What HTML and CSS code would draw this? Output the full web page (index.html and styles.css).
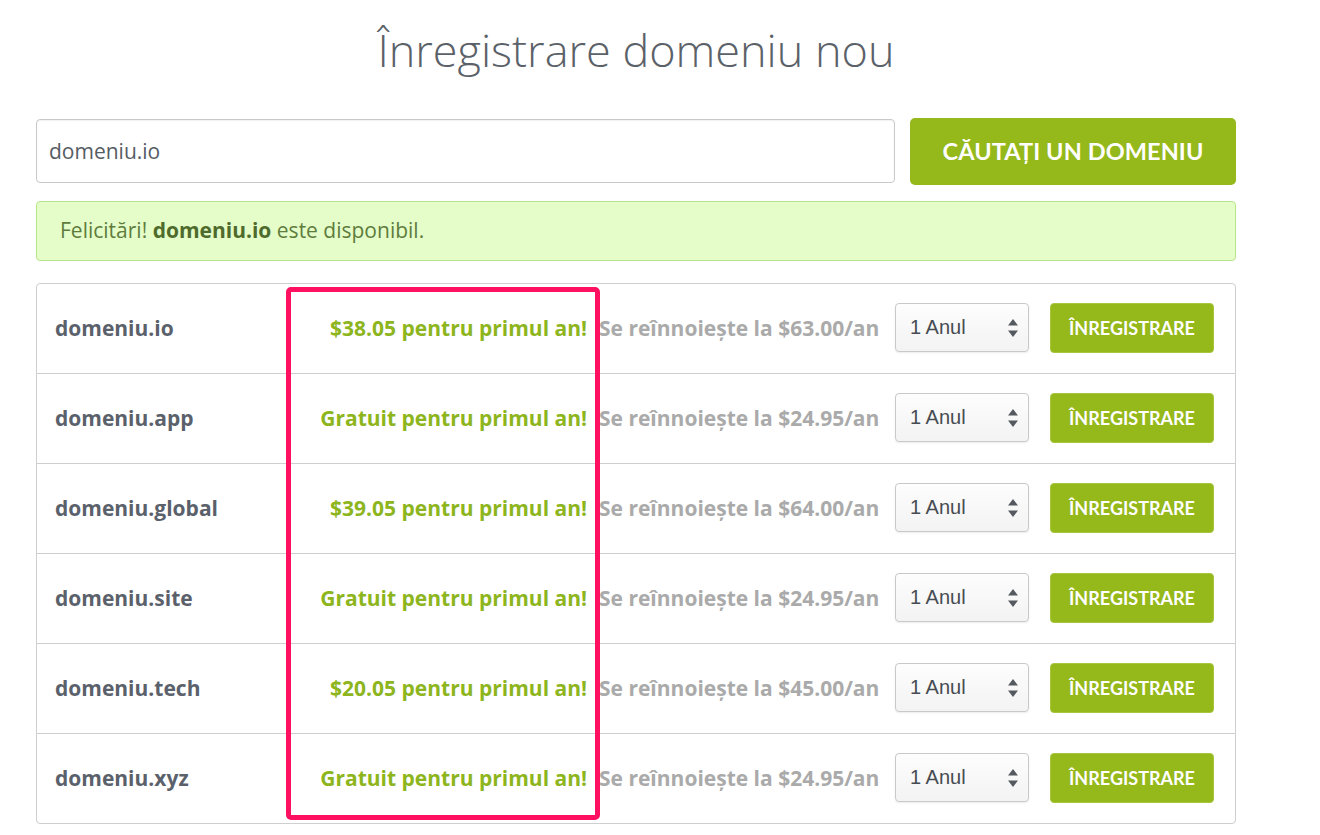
FILE: index.html
```html
<!DOCTYPE html>
<html lang="ro">
<head>
<meta charset="utf-8">
<title>Înregistrare domeniu nou</title>
<link rel="stylesheet" href="styles.css">
</head>
<body>
<div class="page">
  <h1 class="title">Înregistrare domeniu nou</h1>
  <div class="search">
    <div class="search-input">domeniu.io</div>
    <button class="search-btn">CĂUTAȚI UN DOMENIU</button>
  </div>
  <div class="alert"><p class="alert-text">Felicitări! <strong>domeniu.io</strong> este disponibil.</p></div>
  <div class="results">
    <div class="row">
      <div class="name">domeniu.io</div>
      <div class="promo">$38.05 pentru primul an!</div>
      <div class="renew">Se reînnoiește la $63.00/an</div>
      <div class="select"><span>1 Anul</span><svg class="arrows" width="10" height="20" viewBox="0 0 10 20"><path d="M5 1 L10 7.5 L0 7.5 Z M0 12.5 L10 12.5 L5 19 Z" fill="#555a60"/></svg></div>
      <div class="btn-cell"><button class="reg-btn">ÎNREGISTRARE</button></div>
    </div>
    <div class="row">
      <div class="name">domeniu.app</div>
      <div class="promo">Gratuit pentru primul an!</div>
      <div class="renew">Se reînnoiește la $24.95/an</div>
      <div class="select"><span>1 Anul</span><svg class="arrows" width="10" height="20" viewBox="0 0 10 20"><path d="M5 1 L10 7.5 L0 7.5 Z M0 12.5 L10 12.5 L5 19 Z" fill="#555a60"/></svg></div>
      <div class="btn-cell"><button class="reg-btn">ÎNREGISTRARE</button></div>
    </div>
    <div class="row">
      <div class="name">domeniu.global</div>
      <div class="promo">$39.05 pentru primul an!</div>
      <div class="renew">Se reînnoiește la $64.00/an</div>
      <div class="select"><span>1 Anul</span><svg class="arrows" width="10" height="20" viewBox="0 0 10 20"><path d="M5 1 L10 7.5 L0 7.5 Z M0 12.5 L10 12.5 L5 19 Z" fill="#555a60"/></svg></div>
      <div class="btn-cell"><button class="reg-btn">ÎNREGISTRARE</button></div>
    </div>
    <div class="row">
      <div class="name">domeniu.site</div>
      <div class="promo">Gratuit pentru primul an!</div>
      <div class="renew">Se reînnoiește la $24.95/an</div>
      <div class="select"><span>1 Anul</span><svg class="arrows" width="10" height="20" viewBox="0 0 10 20"><path d="M5 1 L10 7.5 L0 7.5 Z M0 12.5 L10 12.5 L5 19 Z" fill="#555a60"/></svg></div>
      <div class="btn-cell"><button class="reg-btn">ÎNREGISTRARE</button></div>
    </div>
    <div class="row">
      <div class="name">domeniu.tech</div>
      <div class="promo">$20.05 pentru primul an!</div>
      <div class="renew">Se reînnoiește la $45.00/an</div>
      <div class="select"><span>1 Anul</span><svg class="arrows" width="10" height="20" viewBox="0 0 10 20"><path d="M5 1 L10 7.5 L0 7.5 Z M0 12.5 L10 12.5 L5 19 Z" fill="#555a60"/></svg></div>
      <div class="btn-cell"><button class="reg-btn">ÎNREGISTRARE</button></div>
    </div>
    <div class="row">
      <div class="name">domeniu.xyz</div>
      <div class="promo">Gratuit pentru primul an!</div>
      <div class="renew">Se reînnoiește la $24.95/an</div>
      <div class="select"><span>1 Anul</span><svg class="arrows" width="10" height="20" viewBox="0 0 10 20"><path d="M5 1 L10 7.5 L0 7.5 Z M0 12.5 L10 12.5 L5 19 Z" fill="#555a60"/></svg></div>
      <div class="btn-cell"><button class="reg-btn">ÎNREGISTRARE</button></div>
    </div>
    <div class="highlight"></div>
  </div>
</div>
</body>
</html>
```

FILE: styles.css
```css
* { box-sizing: border-box; }
html, body { margin: 0; padding: 0; background: #fff; }
body { font-family: "Open Sans", "Liberation Sans", sans-serif; color: #555; }

.page {
  width: 1200px;
  margin-left: 36px;
  padding-top: 20px;
}

.title {
  margin: 0;
  text-align: center;
  font-family: "Open Sans", sans-serif;
  font-weight: 300;
  font-size: 45px;
  line-height: 60px;
  color: #5b6168;
}

.search {
  display: flex;
  align-items: flex-start;
  margin-top: 38px;
  gap: 15px;
}

.search-input {
  width: 859px;
  height: 64px;
  margin-top: 1px;
  border: 1px solid #c9c9c9;
  border-radius: 4px;
  padding: 0 12px 1px;
  display: flex;
  align-items: center;
  font-size: 21px;
  color: #555c63;
  box-shadow: inset 0 1px 2px rgba(0,0,0,0.06);
}

.search-btn {
  width: 326px;
  height: 67px;
  border: none;
  border-radius: 5px;
  background: #95b81b;
  color: #fff;
  font-family: "Lato", sans-serif;
  font-weight: 700;
  font-size: 23.5px;
  letter-spacing: 0.1px;
  padding: 0 0 2px;
}

.alert {
  margin-top: 16px;
  height: 60px;
  border: 1px solid #b8e58c;
  border-radius: 4px;
  background: #e4fdc9;
  display: flex;
  align-items: center;
  padding: 0 23px 3px;
}
.alert-text {
  margin: 0;
  font-size: 21px;
  color: #5f7c3d;
}
.alert-text strong { color: #4f6b2c; font-weight: 700; }

.results {
  position: relative;
  margin-top: 22px;
  border: 1px solid #cfcfcf;
  border-radius: 4px;
}

.row {
  display: grid;
  grid-template-columns: 240px 292px 308px 134px 185px;
  align-items: center;
  height: 90px;
  padding: 0 20px 2px 18px;
  border-top: 1px solid #cfcfcf;
}
.row:first-child { border-top: none; height: 89px; }

.name {
  font-size: 21px;
  font-weight: 700;
  color: #5b616b;
}

.promo {
  text-align: right;
  font-size: 21px;
  font-weight: 700;
  color: #8db51d;
  white-space: nowrap;
}

.renew {
  padding-left: 12px;
  font-size: 21px;
  font-weight: 700;
  color: #aaa;
  white-space: nowrap;
}

.select {
  height: 49px;
  border: 1px solid #c9c9c9;
  border-radius: 4px;
  background: linear-gradient(#fdfdfd, #f3f3f3);
  box-shadow: 0 1px 2px rgba(0,0,0,0.08);
  display: flex;
  align-items: center;
  justify-content: space-between;
  padding: 0 10px 0 14px;
  font-family: "Liberation Sans", Arial, sans-serif;
  font-size: 20px;
  color: #474c52;
}

.btn-cell { display: flex; justify-content: flex-end; }

.reg-btn {
  width: 164px;
  height: 50px;
  border: 1px solid #a6c63e;
  border-radius: 4px;
  background: #95b81b;
  color: #fff;
  font-family: "Lato", sans-serif;
  font-weight: 700;
  font-size: 18px;
  padding: 0;
}

.highlight {
  position: absolute;
  left: 249px;
  top: 3px;
  width: 314px;
  height: 533px;
  border: 5px solid #ff1060;
  border-radius: 5px;
  pointer-events: none;
}
```
